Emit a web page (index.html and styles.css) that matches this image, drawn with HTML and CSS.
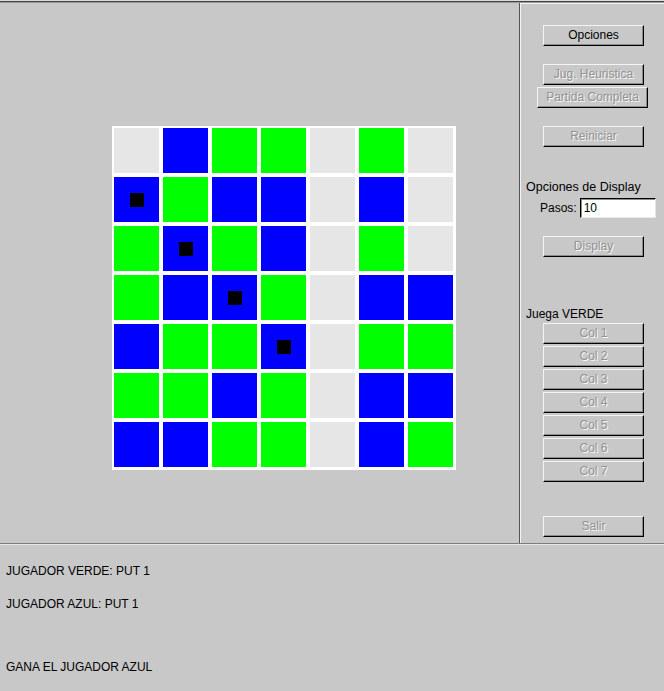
FILE: index.html
```html
<!DOCTYPE html>
<html lang="es">
<head>
<meta charset="utf-8">
<title>Juego</title>
<link rel="stylesheet" href="styles.css">
</head>
<body>
<div class="window">
  <div class="topedge"></div>
  <div class="main">
    <div class="boardarea">
      <div class="board">
        <div class="cell e"></div><div class="cell b"></div><div class="cell g"></div><div class="cell g"></div><div class="cell e"></div><div class="cell g"></div><div class="cell e"></div>
        <div class="cell b"><span class="mark"></span></div><div class="cell g"></div><div class="cell b"></div><div class="cell b"></div><div class="cell e"></div><div class="cell b"></div><div class="cell e"></div>
        <div class="cell g"></div><div class="cell b"><span class="mark"></span></div><div class="cell g"></div><div class="cell b"></div><div class="cell e"></div><div class="cell g"></div><div class="cell e"></div>
        <div class="cell g"></div><div class="cell b"></div><div class="cell b"><span class="mark"></span></div><div class="cell g"></div><div class="cell e"></div><div class="cell b"></div><div class="cell b"></div>
        <div class="cell b"></div><div class="cell g"></div><div class="cell g"></div><div class="cell b"><span class="mark"></span></div><div class="cell e"></div><div class="cell g"></div><div class="cell g"></div>
        <div class="cell g"></div><div class="cell g"></div><div class="cell b"></div><div class="cell g"></div><div class="cell e"></div><div class="cell b"></div><div class="cell b"></div>
        <div class="cell b"></div><div class="cell b"></div><div class="cell g"></div><div class="cell g"></div><div class="cell e"></div><div class="cell b"></div><div class="cell g"></div>
      </div>
    </div>
    <div class="panel">
      <button class="btn opciones">Opciones</button>
      <button class="btn off heur">Jug. Heuristica</button>
      <button class="btn off wide">Partida Completa</button>
      <button class="btn off reiniciar">Reiniciar</button>
      <div class="label display-label">Opciones de Display</div>
      <div class="pasos"><span class="pasos-label">Pasos:</span><input class="pasos-input" type="text" value="10"></div>
      <button class="btn off display">Display</button>
      <div class="label juega">Juega VERDE</div>
      <div class="cols">
        <button class="btn off">Col 1</button>
        <button class="btn off">Col 2</button>
        <button class="btn off">Col 3</button>
        <button class="btn off">Col 4</button>
        <button class="btn off">Col 5</button>
        <button class="btn off">Col 6</button>
        <button class="btn off">Col 7</button>
      </div>
      <button class="btn off salir">Salir</button>
    </div>
  </div>
  <div class="log">
    <p class="line l1">JUGADOR VERDE: PUT 1</p>
    <p class="line l2">JUGADOR AZUL: PUT 1</p>
    <p class="line l3">GANA EL JUGADOR AZUL</p>
  </div>
</div>
</body>
</html>
```

FILE: styles.css
```css
* { box-sizing: border-box; }
html, body {
  margin: 0;
  padding: 0;
  background: #c8c8c8;
}
body {
  font-family: "Liberation Sans", Arial, sans-serif;
  font-size: 12px;
  color: #000;
}
.window {
  width: 664px;
  height: 691px;
  overflow: hidden;
  display: flex;
  flex-direction: column;
}
.topedge {
  height: 3px;
  border-top: 1px solid #dcdcdc;
  border-bottom: 1px solid #9a9a9a;
  background: #424242;
  flex: none;
}
.main {
  display: flex;
  height: 541px;
  flex: none;
  border-bottom: 1px solid #7c7c7c;
}
.boardarea {
  width: 519px;
  flex: none;
  padding: 123px 0 0 112px;
}
.board {
  display: grid;
  grid-template-columns: repeat(7, 45px);
  grid-auto-rows: 45px;
  gap: 4px;
  padding: 2px 3px 3px 2px;
  background: #fff;
  width: 344px;
  height: 344px;
}
.cell {
  display: flex;
  align-items: center;
  justify-content: center;
}
.cell.e { background: #e6e6e6; }
.cell.b { background: #0000ff; }
.cell.g { background: #00ff00; }
.mark {
  width: 14px;
  height: 14px;
  background: #000;
}
.panel {
  flex: 1;
  border-left: 1px solid #555;
  box-shadow: inset 1px 1px 0 #f4f4f4;
  display: flex;
  flex-direction: column;
  align-items: flex-start;
  padding-top: 22px;
}
.btn {
  font-family: "Liberation Sans", Arial, sans-serif;
  font-size: 12px;
  width: 101px;
  height: 21px;
  margin: 0 0 0 23px;
  padding: 0 0 1px;
  background: #c8c8c8;
  color: #000;
  border-style: solid;
  border-width: 1px;
  border-color: #f4f4f4 #000 #000 #f4f4f4;
  box-shadow: inset -1px -1px 0 #8c8c8c;
  line-height: 17px;
  text-align: center;
  flex: none;
}
.btn.off {
  color: #929292;
  text-shadow: 1px 1px 0 #f8f8f8;
}
.heur { margin-top: 18px; }
.wide {
  width: 111px;
  margin-left: 17px;
  margin-top: 2px;
}
.reiniciar { margin-top: 18px; }
.label {
  margin-left: 6px;
  line-height: 14px;
  white-space: nowrap;
}
.display-label {
  margin-top: 33px;
  font-size: 12.5px;
}
.pasos {
  display: flex;
  align-items: center;
  gap: 3px;
  margin: 4px 0 0 20px;
}
.pasos-label { line-height: 14px; }
.pasos-input {
  width: 76px;
  height: 20px;
  padding: 0 0 0 3px;
  margin: 0;
  font-family: "Liberation Sans", Arial, sans-serif;
  font-size: 12px;
  background: #fff;
  color: #000;
  border-style: solid;
  border-width: 1px;
  border-color: #000 #e8e8e8 #e8e8e8 #000;
  box-shadow: inset 1px 1px 0 #8c8c8c;
  outline: none;
}
.display { margin-top: 18px; }
.juega { margin-top: 50px; }
.cols {
  display: flex;
  flex-direction: column;
  gap: 2px;
  margin-top: 2px;
}
.salir { margin-top: 34px; }
.log {
  flex: 1;
  border-top: 1px solid #e6e6e6;
  padding: 19px 0 0 6px;
}
.line {
  margin: 0;
  line-height: 14px;
  white-space: nowrap;
}
.l2 { margin-top: 19px; }
.l3 { margin-top: 49px; }
```
